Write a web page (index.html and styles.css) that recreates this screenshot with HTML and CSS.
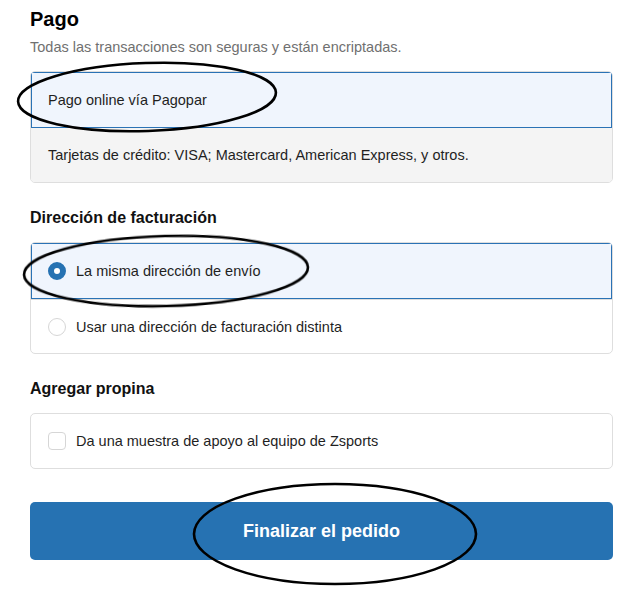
FILE: index.html
```html
<!DOCTYPE html>
<html lang="es">
<head>
    <meta charset="UTF-8">
    <meta name="viewport" content="width=device-width, initial-scale=1.0">
    <title>Pago</title>
    <link rel="stylesheet" href="styles.css">
</head>
<body>
    <div class="checkout">
        <h1>Pago</h1>
        <p class="subtitle">Todas las transacciones son seguras y están encriptadas.</p>

        <div class="box">
            <div class="row selected">Pago online vía Pagopar</div>
            <div class="row info">Tarjetas de crédito: VISA; Mastercard, American Express, y otros.</div>
        </div>

        <h2>Dirección de facturación</h2>
        <div class="box">
            <label class="row selected">
                <span class="radio checked"></span>
                La misma dirección de envío
            </label>
            <label class="row">
                <span class="radio"></span>
                Usar una dirección de facturación distinta
            </label>
        </div>

        <h2>Agregar propina</h2>
        <div class="box">
            <label class="row single">
                <span class="checkbox"></span>
                Da una muestra de apoyo al equipo de Zsports
            </label>
        </div>

        <button class="submit">Finalizar el pedido</button>
    </div>

    <!-- marcas hechas a mano encima de la captura -->
    <svg class="marks" width="644" height="600" viewBox="0 0 644 600">
        <defs>
            <filter id="soft"><feGaussianBlur stdDeviation="0.6"/></filter>
        </defs>
        <g fill="none" stroke="#000" stroke-width="2.6" filter="url(#soft)">
            <ellipse cx="147" cy="97" rx="129" ry="34" transform="rotate(-2 147 97)"/>
            <ellipse cx="166" cy="271" rx="142" ry="35" transform="rotate(-1.5 166 271)"/>
            <ellipse cx="335" cy="534" rx="141" ry="50"/>
        </g>
    </svg>
</body>
</html>
```

FILE: styles.css
```css
body {
    margin: 0;
    background-color: #fff;
    font-family: "Liberation Sans", Arial, sans-serif;
    color: #1f1f1f;
}

.checkout {
    width: 583px;
    padding: 6px 0 0 30px;
}

h1 {
    font-size: 20px;
    line-height: 26px;
    font-weight: bold;
    color: #000;
    margin: 0;
}

.subtitle {
    font-size: 14.5px;
    line-height: 20px;
    color: #707070;
    margin: 5px 0 14px;
}

h2 {
    font-size: 16px;
    line-height: 20px;
    font-weight: bold;
    color: #111;
    margin: 25px 0 14px;
}

/* cajas de opciones */
.box {
    border: 1px solid #dedede;
    border-radius: 5px;
    overflow: hidden;
}

.row {
    display: flex;
    align-items: center;
    gap: 10px;
    height: 54px;
    padding: 0 17px;
    font-size: 14.5px;
    box-sizing: border-box;
    border-top: 1px solid #dedede;
}

.row.selected {
    background-color: #f0f5fd;
    box-shadow: inset 0 0 0 1px #2a72b5;
    height: 56px;
    border-top: none;
}

.row.info {
    background-color: #f4f4f4;
    border-top: none;
}

.row.single {
    border-top: none;
}

.radio {
    width: 18px;
    height: 18px;
    border-radius: 50%;
    border: 1px solid #d6d6d6;
    background-color: #fff;
    box-sizing: border-box;
    flex-shrink: 0;
}

.radio.checked {
    border: 6px solid #2672b2;
}

.checkbox {
    width: 18px;
    height: 18px;
    border-radius: 4px;
    border: 1px solid #d6d6d6;
    background-color: #fff;
    box-sizing: border-box;
    flex-shrink: 0;
}

.submit {
    display: block;
    width: 100%;
    height: 58px;
    margin-top: 33px;
    background-color: #2672b2;
    color: #fff;
    border: none;
    border-radius: 5px;
    font-family: "Liberation Sans", Arial, sans-serif;
    font-size: 18px;
    font-weight: bold;
}

.marks {
    position: absolute;
    top: 0;
    left: 0;
    pointer-events: none;
}
```
